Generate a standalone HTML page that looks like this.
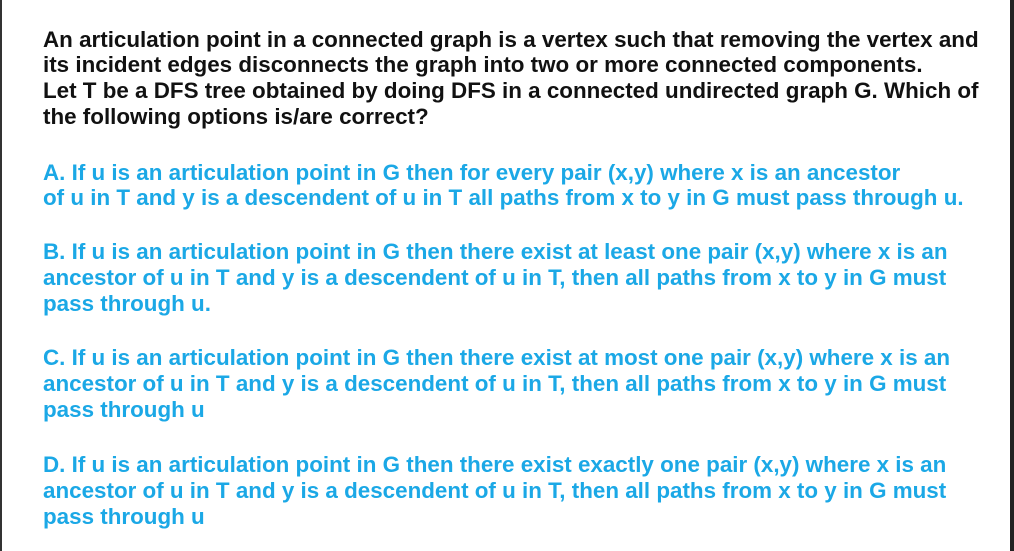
<!DOCTYPE html>
<html><head><meta charset="utf-8"><style>
html,body{margin:0;padding:0;background:#fff;}
body{width:1014px;height:551px;position:relative;overflow:hidden;font-family:"Liberation Sans",Arial,sans-serif;font-weight:bold;font-size:22.4px;}
.l{position:absolute;left:43px;white-space:nowrap;line-height:26px;}
.k{color:#111;}
.b{color:#1ba8e6;}
.bl{position:absolute;left:0;top:0;width:2px;height:551px;background:#333;}
.br{position:absolute;right:0;top:0;width:4px;height:551px;background:#222;}
</style></head><body>
<div class="bl"></div><div class="br"></div>
<div class="l k" style="top:27px">An articulation point in a connected graph is a vertex such that removing the vertex and</div>
<div class="l k" style="top:52px">its incident edges disconnects the graph into two or more connected components.</div>
<div class="l k" style="top:78px">Let T be a DFS tree obtained by doing DFS in a connected undirected graph G. Which of</div>
<div class="l k" style="top:104px">the following options is/are correct?</div>
<div class="l b" style="top:160px">A. If u is an articulation point in G then for every pair (x,y) where x is an ancestor</div>
<div class="l b" style="top:185px">of u in T and y is a descendent of u in T all paths from x to y in G must pass through u.</div>
<div class="l b" style="top:239px">B. If u is an articulation point in G then there exist at least one pair (x,y) where x is an</div>
<div class="l b" style="top:265px">ancestor of u in T and y is a descendent of u in T, then all paths from x to y in G must</div>
<div class="l b" style="top:291px">pass through u.</div>
<div class="l b" style="top:345px">C. If u is an articulation point in G then there exist at most one pair (x,y) where x is an</div>
<div class="l b" style="top:371px">ancestor of u in T and y is a descendent of u in T, then all paths from x to y in G must</div>
<div class="l b" style="top:397px">pass through u</div>
<div class="l b" style="top:452px">D. If u is an articulation point in G then there exist exactly one pair (x,y) where x is an</div>
<div class="l b" style="top:478px">ancestor of u in T and y is a descendent of u in T, then all paths from x to y in G must</div>
<div class="l b" style="top:504px">pass through u</div>
</body></html>
